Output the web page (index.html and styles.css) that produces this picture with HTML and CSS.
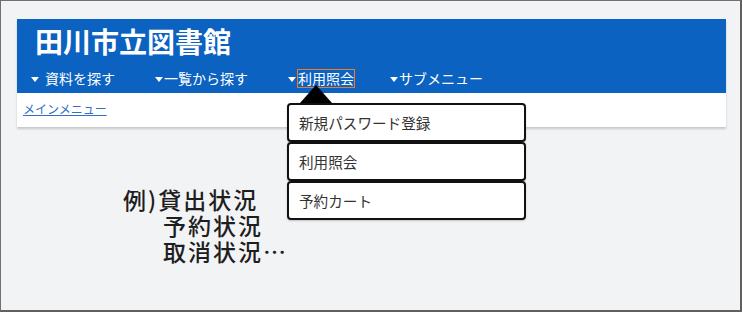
FILE: index.html
```html
<html>
  <head>
    <meta charset="UTF-8">
    <title>田川市立図書館</title>
    <link rel="stylesheet" href="styles.css">
  </head>
  <body>
    <div class="frame">
      <div class="panel">
        <div class="head">
          <h1 class="title">田川市立図書館</h1>
          <ul class="nav">
            <li class="nav-item first">資料を探す</li>
            <li class="nav-item">一覧から探す</li>
            <li class="nav-item current"><span class="mark">利用照会</span></li>
            <li class="nav-item">サブメニュー</li>
          </ul>
        </div>
        <div class="crumb"><a href="#">メインメニュー</a></div>
      </div>

      <div class="note">
        <p>例)貸出状況</p>
        <p class="indent">予約状況</p>
        <p class="indent">取消状況…</p>
      </div>

      <!-- 利用照会のプルダウン -->
      <div class="pointer"></div>
      <ul class="drop">
        <li class="drop-item">新規パスワード登録</li>
        <li class="drop-item">利用照会</li>
        <li class="drop-item">予約カート</li>
      </ul>
    </div>
  </body>
</html>
```

FILE: styles.css
```css
body {
  margin: 0;
  font-family: 'Noto Sans CJK JP', 'Noto Sans', sans-serif;
}

.frame {
  position: relative;
  box-sizing: border-box;
  width: 742px;
  height: 312px;
  background: #f2f3f5;
  border-top: 1px solid #707070;
  border-left: 1px solid #707070;
  border-right: 2px solid #606060;
  border-bottom: 2px solid #606060;
  overflow: hidden;
}

.panel {
  width: 709px;
  margin: 18px 0 0 16px;
  background: #fff;
  box-shadow: 0 2px 2px rgba(0, 0, 0, 0.18);
}

.head {
  box-sizing: border-box;
  height: 74px;
  padding: 8px 0 0 18px;
  background: #0b62c1;
  color: #fff;
}

.title {
  margin: 0;
  font-size: 28px;
  line-height: 28px;
  font-weight: bold;
}

.nav {
  display: flex;
  gap: 40px;
  list-style: none;
  margin: 13px 0 0 -4px;
  padding: 0;
  font-size: 14px;
  line-height: 20px;
}

.nav-item {
  display: flex;
  align-items: center;
}

.nav-item::before {
  content: "";
  width: 0;
  height: 0;
  margin: 3px 1px 0 0;
  border-left: 4px solid transparent;
  border-right: 4px solid transparent;
  border-top: 5px solid #fff;
}

.nav-item.first::before {
  margin-right: 6px;
}

.nav-item.current {
  margin-right: -5px;
}

.nav-item.current::before {
  margin-right: 1px;
}

.mark {
  display: block;
  line-height: 17px;
  border: 1.5px solid #f07a28;
}

.crumb {
  box-sizing: border-box;
  height: 34px;
  padding: 8px 0 0 6px;
  font-size: 12px;
  line-height: 16px;
}

.crumb a {
  color: #2f6dc6;
}

.note {
  margin: 59px 0 0 122px;
  font-size: 23px;
  line-height: 26px;
  letter-spacing: 2px;
  font-weight: 500;
  color: #1e1e1e;
}

.note p {
  margin: 0;
}

.note .indent {
  padding-left: 40px;
}

.pointer {
  position: absolute;
  left: 299px;
  top: 84px;
  width: 0;
  height: 0;
  border-left: 16px solid transparent;
  border-right: 16px solid transparent;
  border-bottom: 18px solid #000;
}

.drop {
  position: absolute;
  left: 286px;
  top: 102px;
  width: 239px;
  margin: 0;
  padding: 0;
  list-style: none;
}

.drop-item {
  box-sizing: border-box;
  height: 39px;
  padding-left: 10px;
  border: 2px solid #111;
  border-radius: 4px;
  background: #fff;
  font-size: 14.6px;
  line-height: 35px;
  color: #333;
  box-shadow: 0 1px 2px rgba(0, 0, 0, 0.2);
}
```
